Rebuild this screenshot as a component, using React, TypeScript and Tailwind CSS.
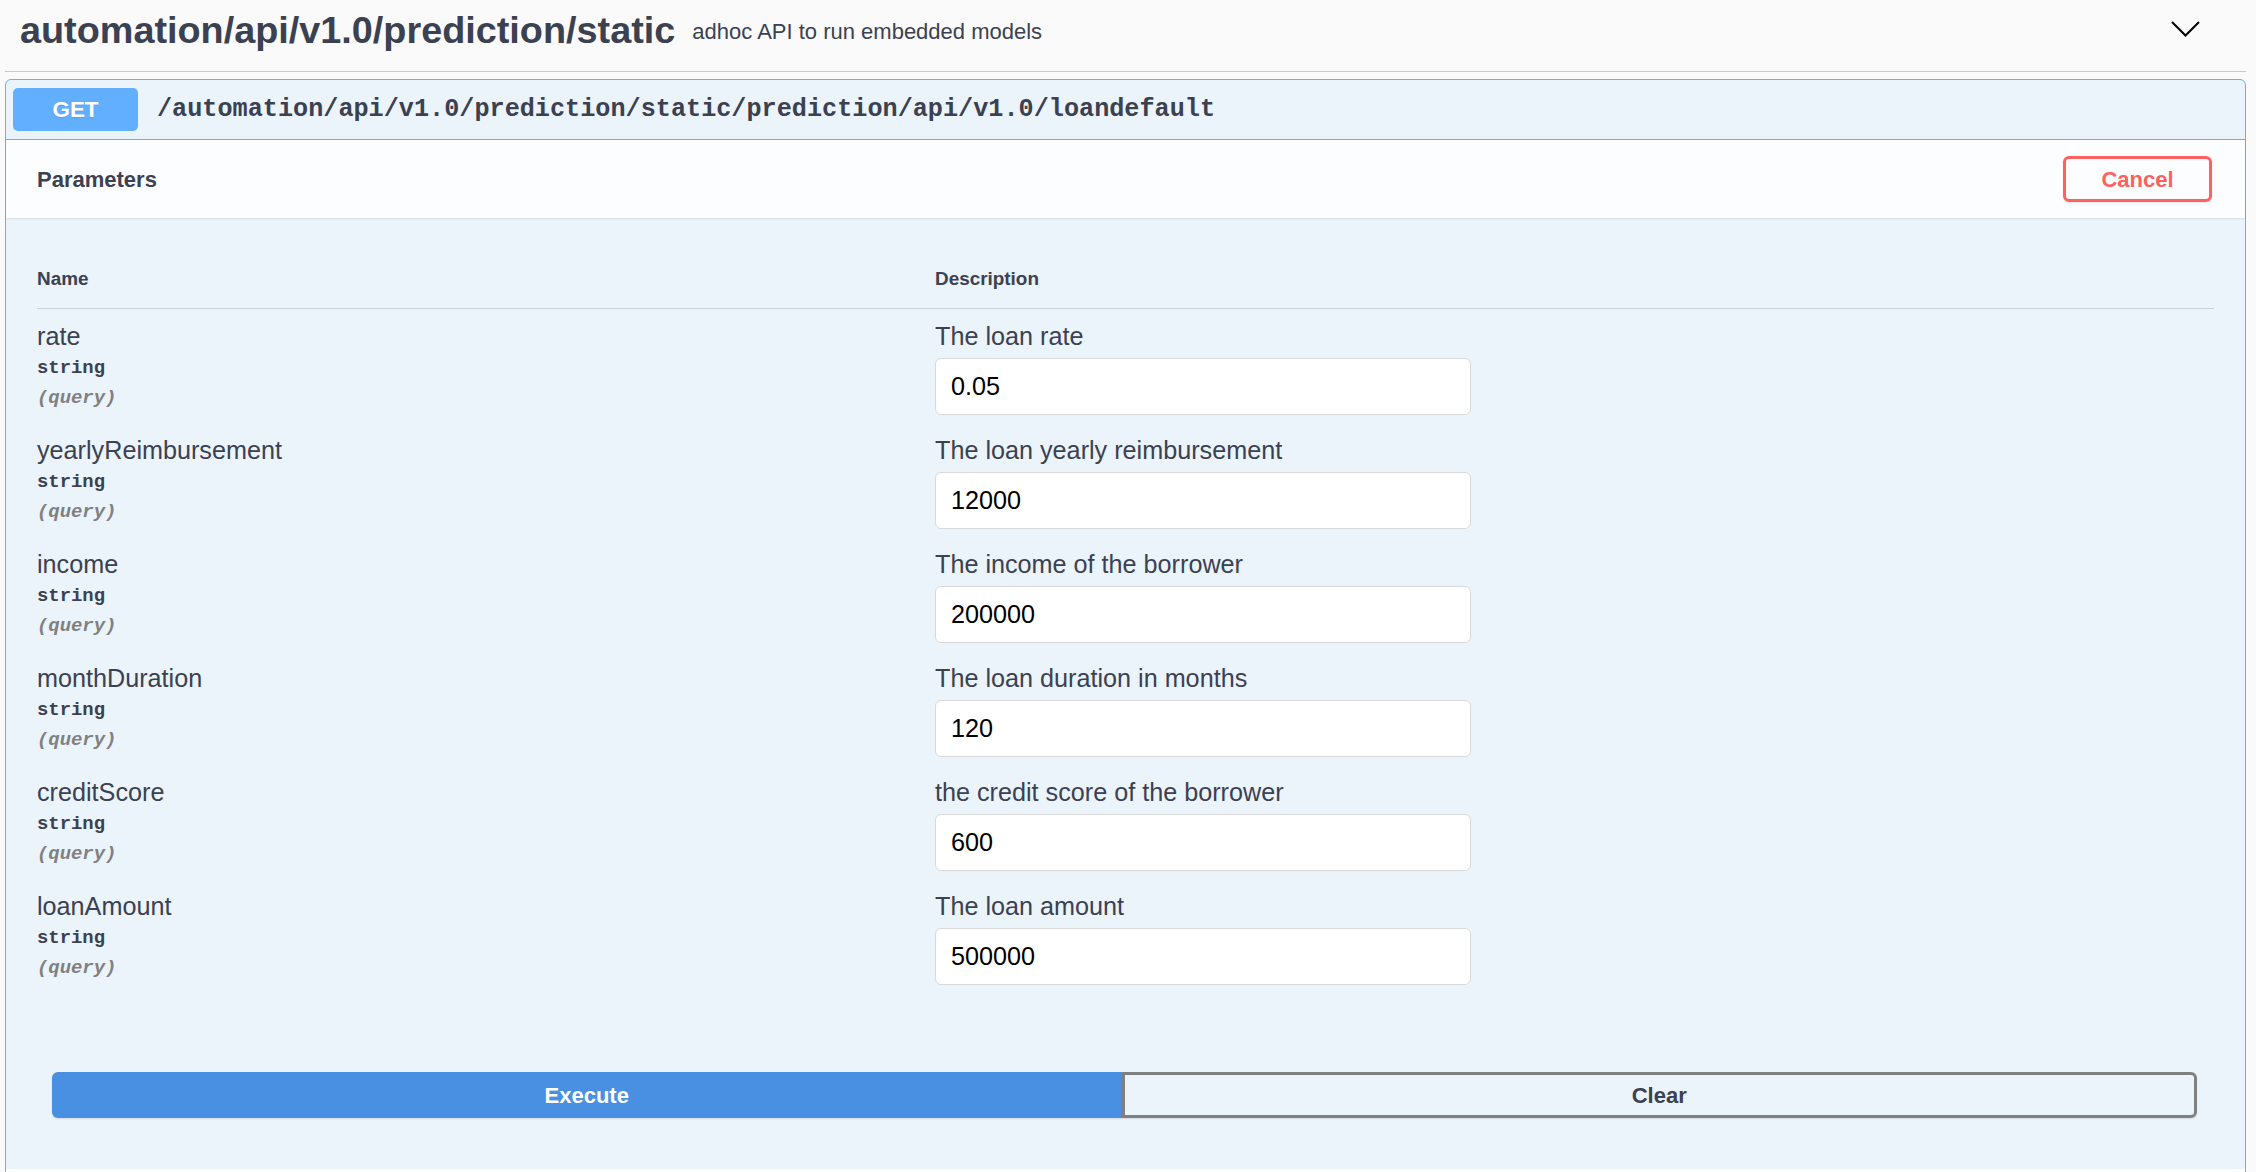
const SANS = "font-['Liberation_Sans',Arial,sans-serif]";

interface Param {
  name: string;
  description: string;
  value: string;
}

const PARAMS: Param[] = [
  { name: "rate", description: "The loan rate", value: "0.05" },
  { name: "yearlyReimbursement", description: "The loan yearly reimbursement", value: "12000" },
  { name: "income", description: "The income of the borrower", value: "200000" },
  { name: "monthDuration", description: "The loan duration in months", value: "120" },
  { name: "creditScore", description: "the credit score of the borrower", value: "600" },
  { name: "loanAmount", description: "The loan amount", value: "500000" },
];

function ParamRow({ p }: { p: Param }) {
  return (
    <div className="flex h-[114px] pt-[12px]">
      {/* name column */}
      <div className="w-[898px] shrink-0">
        <div className="text-[25.2px] leading-[30px] text-[#3b4151]">{p.name}</div>
        <div className="mt-[5px] font-['Liberation_Mono',monospace] text-[18.9px] font-bold leading-[24px] text-[#3b4151]">
          string
        </div>
        <div className="mt-[6px] font-['Liberation_Mono',monospace] text-[18.9px] font-bold italic leading-[24px] text-[#808080]">
          (query)
        </div>
      </div>
      {/* description column */}
      <div className="flex-1">
        <div className="text-[25.2px] leading-[30px] text-[#3b4151]">{p.description}</div>
        <input
          readOnly
          value={p.value}
          className="mt-[7px] block h-[57px] w-[536px] rounded-[6px] border border-[#d9d9d9] bg-white px-[15px] text-[25.2px] text-black outline-none"
        />
      </div>
    </div>
  );
}

export default function App() {
  return (
    <div className={`h-[1172px] w-[2256px] overflow-hidden bg-[#fafafa] text-[#3b4151] ${SANS}`}>
      <div className="ml-[5px] mr-[10px]">
        {/* tag header */}
        <div className="flex h-[72px] items-center border-b border-[#c8c8c8] pb-[10px] pl-[15px]">
          <h3 className="text-[37.8px] font-bold leading-none">automation/api/v1.0/prediction/static</h3>
          <small className="flex-1 px-[17px] pt-[2px] text-[22px]">adhoc API to run embedded models</small>
          <svg width="29" height="16" viewBox="0 0 29 16" className="mb-[4px] mr-[46px]">
            <polyline points="1,1 14.5,14.5 28,1" fill="none" stroke="#000" strokeWidth="2" />
          </svg>
        </div>

        {/* operation block */}
        <div className="mt-[7px] rounded-[6px] border border-[#61affe] bg-[#ebf3fb]">
          <div className="flex h-[60px] items-center border-b border-[#61affe] px-[7px]">
            <span className="flex h-[43px] w-[125px] items-center justify-center rounded-[5px] bg-[#61affe] text-[22.4px] font-bold text-white [text-shadow:0_1px_0_rgba(0,0,0,0.1)]">
              GET
            </span>
            <span className="ml-[19px] font-['Liberation_Mono',monospace] text-[25.2px] font-bold text-[#3b4151]">
              /automation/api/v1.0/prediction/static/prediction/api/v1.0/loandefault
            </span>
          </div>

          {/* parameters header */}
          <div className="flex h-[78px] items-center justify-between bg-[#fbfdff] pl-[31px] pr-[33px] shadow-[0_1px_2px_rgba(0,0,0,0.1)]">
            <h4 className="text-[22px] font-bold">Parameters</h4>
            <button className="h-[46px] w-[149px] rounded-[6px] border-[3px] border-[#ff6060] text-[22px] font-bold text-[#ff6060] shadow-[0_1px_2px_rgba(0,0,0,0.1)]">
              Cancel
            </button>
          </div>

          {/* parameters table */}
          <div className="px-[31px] pt-[32px]">
            <div className="flex h-[59px] items-center border-b border-[#c8cfd9] text-[18.9px] font-bold">
              <div className="w-[898px] shrink-0">Name</div>
              <div>Description</div>
            </div>
            {PARAMS.map((p) => (
              <ParamRow key={p.name} p={p} />
            ))}
          </div>

          {/* execute / clear */}
          <div className="flex pb-[51px] pl-[46px] pr-[48px] pt-[79px]">
            <button className="h-[46px] flex-1 rounded-l-[6px] bg-[#4990e2] text-[22px] font-bold text-white shadow-[0_1px_2px_rgba(0,0,0,0.1)]">
              Execute
            </button>
            <button className="h-[46px] flex-1 rounded-r-[6px] border-[3px] border-[#808080] text-[22px] font-bold text-[#3b4151] shadow-[0_1px_2px_rgba(0,0,0,0.1)]">
              Clear
            </button>
          </div>

          <div className="h-[60px] bg-[#fbfdff]" />
        </div>
      </div>
    </div>
  );
}
